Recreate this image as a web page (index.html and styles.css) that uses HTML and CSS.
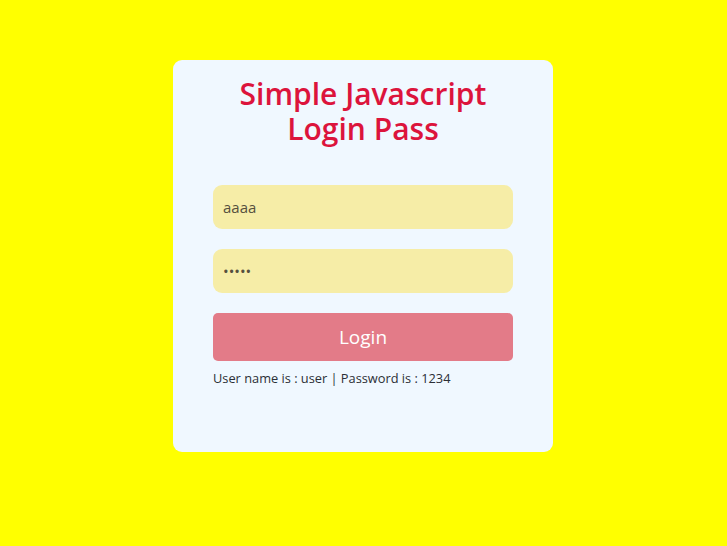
FILE: index.html
```html
<!DOCTYPE html>
<html lang="en">
<head>
<meta charset="utf-8">
<title>Simple Javascript Login Pass</title>
<link rel="stylesheet" href="styles.css">
</head>
<body>
<div class="card">
  <h1 class="title">Simple Javascript Login Pass</h1>
  <form class="form">
    <input class="field" type="text" value="aaaa">
    <input class="field" type="password" value="aaaaa">
    <button class="btn" type="button">Login</button>
    <p class="hint">User name is : user | Password is : 1234</p>
  </form>
</div>
</body>
</html>
```
FILE: styles.css
```css
html, body {
  margin: 0;
  padding: 0;
}
body {
  background: #ffff00;
  font-family: "Open Sans", "Noto Sans", sans-serif;
  height: 546px;
  overflow: hidden;
}
.card {
  box-sizing: border-box;
  width: 380px;
  height: 392px;
  margin: 60px 0 0 173px;
  background: #f0f8ff;
  border-radius: 9px;
  padding: 16px 40px 0;
}
.title {
  margin: 0;
  color: #dc143c;
  font-size: 30px;
  font-weight: 600;
  line-height: 35px;
  text-align: center;
  padding: 0 20px;
}
.form {
  display: flex;
  flex-direction: column;
  gap: 20px;
  margin-top: 39px;
}
.field {
  box-sizing: border-box;
  height: 44px;
  width: 100%;
  border: none;
  outline: none;
  border-radius: 9px;
  background: #f6eda7;
  padding: 0 10px;
  font-family: inherit;
  font-size: 15px;
  color: #55503e;
}
.btn {
  height: 48px;
  border: none;
  border-radius: 5px;
  background: #e37b88;
  color: #ffffff;
  font-family: inherit;
  font-size: 19px;
  font-weight: 500;
  cursor: pointer;
}
.hint {
  margin: -12px 0 0;
  font-size: 12.8px;
  color: #2b2f36;
}
```
